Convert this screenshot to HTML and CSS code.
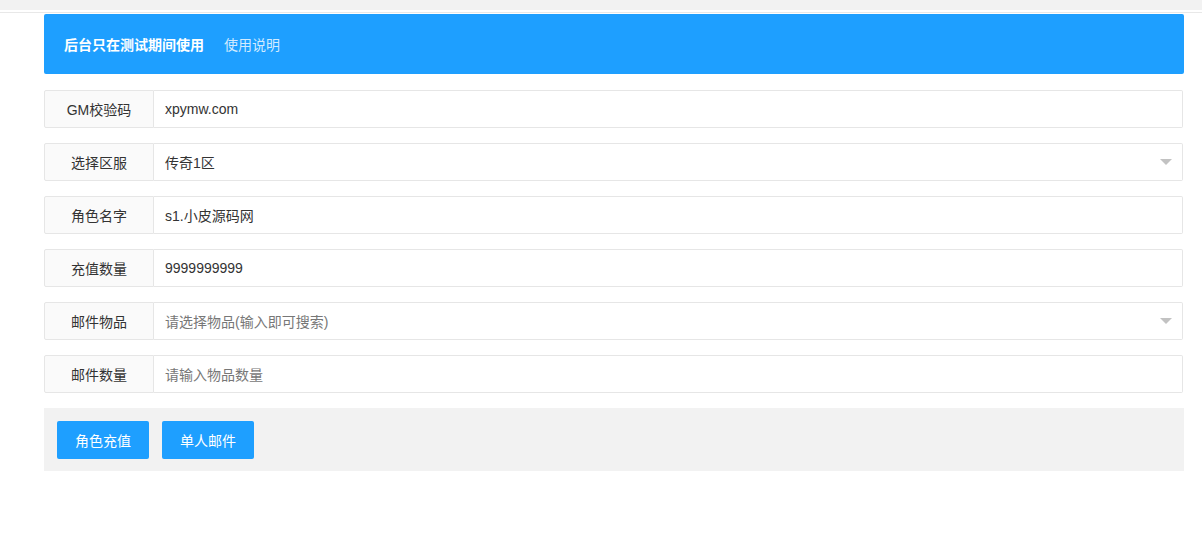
FILE: index.html
```html
<!DOCTYPE html>
<html lang="zh-CN">
<head>
<meta charset="utf-8">
<title>GM</title>
<link rel="stylesheet" href="styles.css">
</head>
<body>
<div class="topbar"></div>
<div class="topline"></div>
<main class="wrap">
  <div class="notice">
    <span class="notice-main">后台只在测试期间使用</span>
    <span class="notice-link">使用说明</span>
  </div>
  <form class="form">
    <div class="row">
      <label class="label">GM校验码</label>
      <div class="field"><span class="value">xpymw.com</span></div>
    </div>
    <div class="row">
      <label class="label">选择区服</label>
      <div class="field select"><span class="value">传奇1区</span><i class="caret"></i></div>
    </div>
    <div class="row">
      <label class="label">角色名字</label>
      <div class="field"><span class="value">s1.小皮源码网</span></div>
    </div>
    <div class="row">
      <label class="label">充值数量</label>
      <div class="field"><span class="value">9999999999</span></div>
    </div>
    <div class="row">
      <label class="label">邮件物品</label>
      <div class="field select"><span class="placeholder">请选择物品(输入即可搜索)</span><i class="caret"></i></div>
    </div>
    <div class="row">
      <label class="label">邮件数量</label>
      <div class="field"><span class="placeholder">请输入物品数量</span></div>
    </div>
    <div class="actions">
      <button type="button" class="btn">角色充值</button>
      <button type="button" class="btn">单人邮件</button>
    </div>
  </form>
</main>
</body>
</html>
```
FILE: styles.css
```css
* { box-sizing: border-box; }
html, body { margin: 0; padding: 0; background: #fff; }
body {
  font-family: "Liberation Sans", "Noto Sans CJK SC", sans-serif;
  font-size: 14px;
  color: #333;
}
.topbar { height: 10px; background: #f2f2f2; }
.topline { height: 1px; margin-top: 2px; background: #e8e8e8; }
.wrap { margin: 1px 0 0 44px; width: 1140px; }
.notice {
  height: 60px;
  background: #1E9FFF;
  border-radius: 2px;
  display: flex;
  align-items: center;
  padding: 0 0 1px 20px;
  gap: 20px;
}
.notice-main { color: #fff; font-weight: bold; }
.notice-link { color: #d2ebff; }
.form { margin-top: 16px; }
.row {
  display: flex;
  height: 38px;
  margin-bottom: 15px;
  width: 1139px;
}
.label {
  width: 110px;
  flex: none;
  display: flex;
  align-items: center;
  justify-content: center;
  padding-bottom: 1px;
  background: #fafafa;
  border: 1px solid #e6e6e6;
  border-radius: 2px 0 0 2px;
  color: #333;
}
.field {
  flex: 1;
  position: relative;
  border: 1px solid #e6e6e6;
  border-left: none;
  border-radius: 0 2px 2px 0;
  display: flex;
  align-items: center;
  padding: 0 0 1px 11px;
}
.value { color: #333; }
.placeholder { color: #777; }
.caret {
  position: absolute;
  right: 10px;
  top: 50%;
  margin-top: -3px;
  width: 0;
  height: 0;
  border-left: 6px solid transparent;
  border-right: 6px solid transparent;
  border-top: 6px solid #c2c2c2;
}
.actions {
  background: #f2f2f2;
  height: 63px;
  display: flex;
  align-items: flex-start;
  padding: 13px 0 0 13px;
  gap: 13px;
}
.btn {
  height: 38px;
  padding: 0 18px 1px;
  border: none;
  border-radius: 2px;
  background: #1E9FFF;
  color: #fff;
  font-family: inherit;
  font-size: 14px;
  cursor: pointer;
}
```
